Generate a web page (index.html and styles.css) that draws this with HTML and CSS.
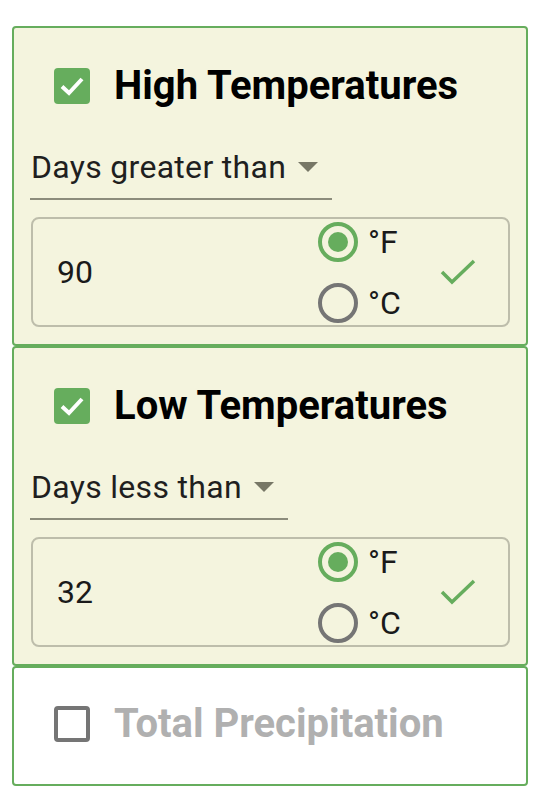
FILE: index.html
```html
<!DOCTYPE html>
<html>
<head>
<meta charset="utf-8">
<link rel="stylesheet" href="styles.css">
</head>
<body>
<div class="list">
  <section class="card active">
    <div class="head">
      <span class="box checked"><svg viewBox="0 0 36 36" width="36" height="36"><path d="M8 18.5 L15 25 L28 11" fill="none" stroke="#fff" stroke-width="4"/></svg></span>
      <span class="title">High Temperatures</span>
    </div>
    <div class="select sel-high"><span class="sel-text">Days greater than</span><span class="arrow"></span></div>
    <div class="field">
      <span class="num">90</span>
      <div class="units">
        <div class="unit"><span class="radio on"></span><span class="ulabel">°F</span></div>
        <div class="unit"><span class="radio"></span><span class="ulabel">°C</span></div>
      </div>
      <svg class="ok" viewBox="0 0 36 28" width="36" height="28"><path d="M2 14 L12 24 L34 3" fill="none" stroke="#66ad5d" stroke-width="3.5"/></svg>
    </div>
  </section>
  <section class="card active">
    <div class="head">
      <span class="box checked"><svg viewBox="0 0 36 36" width="36" height="36"><path d="M8 18.5 L15 25 L28 11" fill="none" stroke="#fff" stroke-width="4"/></svg></span>
      <span class="title">Low Temperatures</span>
    </div>
    <div class="select sel-low"><span class="sel-text">Days less than</span><span class="arrow"></span></div>
    <div class="field">
      <span class="num">32</span>
      <div class="units">
        <div class="unit"><span class="radio on"></span><span class="ulabel">°F</span></div>
        <div class="unit"><span class="radio"></span><span class="ulabel">°C</span></div>
      </div>
      <svg class="ok" viewBox="0 0 36 28" width="36" height="28"><path d="M2 14 L12 24 L34 3" fill="none" stroke="#66ad5d" stroke-width="3.5"/></svg>
    </div>
  </section>
  <section class="card inactive">
    <div class="head">
      <span class="box"></span>
      <span class="title">Total Precipitation</span>
    </div>
  </section>
</div>
</body>
</html>
```
FILE: styles.css
```css
html, body {
  margin: 0;
  padding: 0;
  background: #ffffff;
}
body {
  font-family: Roboto, "Liberation Sans", sans-serif;
  color: #1a1a1a;
}
.list {
  padding: 26px 0 0 12px;
  width: 516px;
  display: flex;
  flex-direction: column;
}
.card {
  border: 2px solid #66ad5d;
  border-radius: 4px;
  box-sizing: border-box;
  padding: 40px 16px 0 16px;
}
.card.active {
  background: #f4f4de;
  height: 320px;
}
.card.inactive {
  background: #ffffff;
  height: 120px;
  padding-top: 38px;
}
.head {
  display: flex;
  align-items: center;
  height: 36px;
  padding-left: 24px;
}
.box {
  width: 36px;
  height: 36px;
  box-sizing: border-box;
  border-radius: 4px;
  border: 4px solid #757575;
  flex: none;
  display: block;
}
.box.checked {
  background: #66ad5d;
  border: none;
}
.box svg { display: block; }
.title {
  margin-left: 24px;
  font-weight: 700;
  font-size: 40px;
  line-height: 36px;
  color: #000;
  white-space: nowrap;
}
.inactive .title { color: #b0b0b0; }
.select {
  margin-top: 45px;
  display: flex;
  align-items: center;
  border-bottom: 2px solid #8c8c7c;
  padding-bottom: 13px;
  padding-left: 1px;
  font-size: 32px;
  letter-spacing: 0.3px;
  line-height: 36px;
  color: #1f1f1f;
}
.sel-high { width: 301px; }
.sel-low { width: 257px; }
.arrow {
  margin-left: 12px;
  width: 0;
  height: 0;
  border-left: 10px solid transparent;
  border-right: 10px solid transparent;
  border-top: 10px solid #777766;
}
.field {
  margin-top: 17px;
  margin-left: 1px;
  height: 110px;
  box-sizing: border-box;
  border: 2px solid #bdbdab;
  border-radius: 8px;
  display: flex;
  align-items: center;
  padding-left: 24px;
  padding-right: 32px;
}
.num {
  font-size: 32px;
  color: #1a1a1a;
  width: 261px;
}
.units {
  display: flex;
  flex-direction: column;
  gap: 21px;
}
.unit {
  display: flex;
  align-items: center;
  height: 40px;
}
.radio {
  width: 40px;
  height: 40px;
  box-sizing: border-box;
  border-radius: 50%;
  border: 4px solid #757575;
  display: block;
  position: relative;
}
.radio.on {
  border-color: #66ad5d;
}
.radio.on::after {
  content: "";
  position: absolute;
  left: 6px;
  top: 6px;
  width: 20px;
  height: 20px;
  border-radius: 50%;
  background: #66ad5d;
}
.ulabel {
  margin-left: 10px;
  font-size: 32px;
  color: #1a1a1a;
}
.ok {
  margin-left: auto;
  display: block;
}
```
